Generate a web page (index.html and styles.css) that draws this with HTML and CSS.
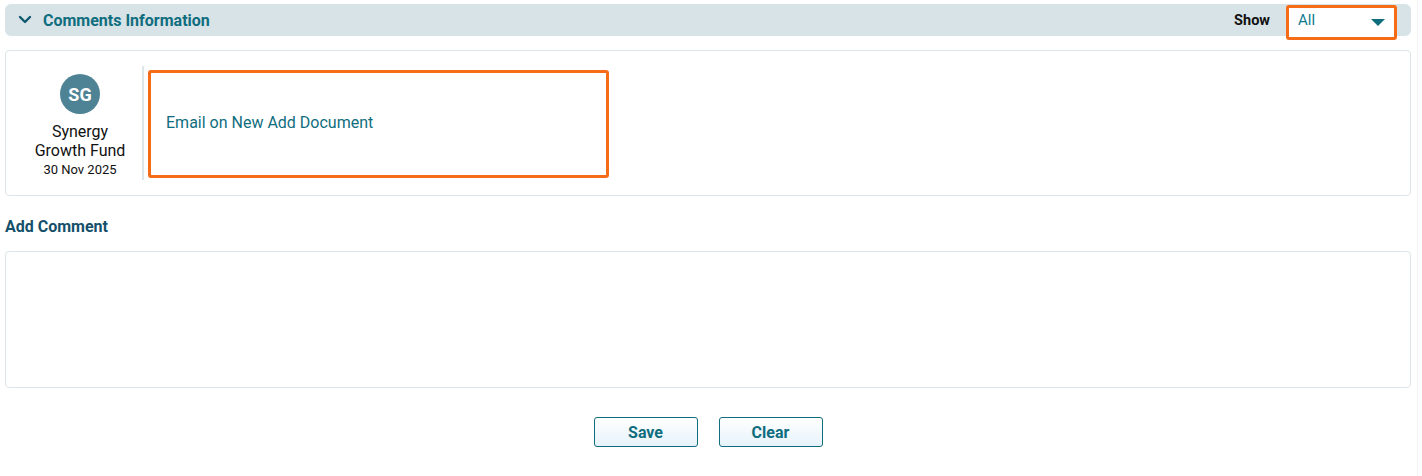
FILE: index.html
```html
<!DOCTYPE html>
<html>
<head>
<meta charset="utf-8">
<link rel="stylesheet" href="styles.css">
</head>
<body>
<div class="page">
  <div class="panel">
    <div class="section-header">
      <div class="title-group">
        <svg class="chevron" width="14" height="10" viewBox="0 0 14 10"><path d="M2 2 L7 7 L12 2" fill="none" stroke="#0f5a6e" stroke-width="2.4" stroke-linecap="round" stroke-linejoin="round"/></svg>
        <span class="title">Comments Information</span>
      </div>
      <div class="show-group">
        <span class="show-label">Show</span>
        <div class="select">
          <span class="select-value">All</span>
          <svg class="caret" width="14" height="8" viewBox="0 0 14 8"><path d="M0 0 L14 0 L7 7 Z" fill="#0f6d7e"/></svg>
        </div>
      </div>
    </div>

    <div class="comment-card">
      <div class="author">
        <div class="avatar">SG</div>
        <div class="author-name">Synergy<br>Growth Fund</div>
        <div class="author-date">30 Nov 2025</div>
      </div>
      <div class="divider"></div>
      <div class="comment-body">
        <div class="comment-text">Email on New Add Document</div>
      </div>
    </div>

    <div class="add-label">Add Comment</div>
    <textarea class="comment-input"></textarea>

    <div class="actions">
      <button class="btn">Save</button>
      <button class="btn">Clear</button>
    </div>
  </div>
</div>
</body>
</html>
```

FILE: styles.css
```css
html, body {
  margin: 0;
  padding: 0;
  background: #ffffff;
  font-family: Roboto, "Liberation Sans", Arial, sans-serif;
}
.page {
  width: 1418px;
  min-height: 476px;
  border-right: 1px solid #f1f3f4;
  box-sizing: border-box;
}
.panel {
  width: 1406px;
  margin-left: 5px;
  padding-top: 4px;
}
.section-header {
  height: 32px;
  background: #d8e3e8;
  border-radius: 6px;
  display: flex;
  align-items: center;
  justify-content: space-between;
}
.title-group {
  display: flex;
  align-items: center;
  padding-left: 13px;
}
.chevron {
  display: block;
  margin-right: 11px;
}
.title {
  font-size: 16px;
  font-weight: 700;
  color: #0f6d7e;
}
.show-group {
  display: flex;
  align-items: center;
  padding-right: 14px;
}
.show-label {
  font-size: 14.5px;
  font-weight: 700;
  color: #111;
  margin-right: 16px;
}
.select {
  width: 87px;
  height: 29px;
  border: 3px solid #f66c16;
  border-radius: 3px;
  background: #fff;
  display: flex;
  align-items: center;
  justify-content: space-between;
  padding: 0 9px 0 9px;
  margin-top: 4px;
}
.select-value {
  font-size: 15px;
  color: #0f7a8e;
  margin-top: -4px;
}
.caret {
  display: block;
  margin-top: 1px;
}
.comment-card {
  margin-top: 14px;
  height: 146px;
  box-sizing: border-box;
  border: 1px solid #dce5e9;
  border-radius: 4px;
  display: flex;
  align-items: center;
}
.author {
  width: 124px;
  margin-left: 12px;
  display: flex;
  flex-direction: column;
  align-items: center;
  padding-top: 5px;
}
.avatar {
  width: 40px;
  height: 40px;
  border-radius: 50%;
  background: #4e8395;
  color: #fff;
  font-weight: 700;
  font-size: 18px;
  display: flex;
  align-items: center;
  justify-content: center;
  margin-bottom: 8px;
}
.author-name {
  font-size: 16px;
  line-height: 19px;
  text-align: center;
  color: #111;
}
.author-date {
  font-size: 13px;
  color: #111;
  margin-top: 2px;
}
.divider {
  width: 2px;
  height: 114px;
  background: #dde6ea;
}
.comment-body {
  margin-left: 4px;
  width: 455px;
  height: 99px;
  padding-bottom: 3px;
  border: 3px solid #f66c16;
  border-radius: 3px;
  display: flex;
  align-items: center;
  margin-top: 2px;
}
.comment-text {
  font-size: 16px;
  color: #0f6d7e;
  padding-left: 15px;
}
.add-label {
  margin-top: 21px;
  font-size: 16px;
  font-weight: 700;
  color: #15506a;
  line-height: 19px;
}
.comment-input {
  display: block;
  margin-top: 15px;
  width: 1406px;
  height: 137px;
  box-sizing: border-box;
  border: 1px solid #dce5e9;
  border-radius: 4px;
  resize: none;
  outline: none;
}
.actions {
  display: flex;
  justify-content: center;
  gap: 21px;
  margin-top: 29px;
}
.btn {
  width: 104px;
  height: 30px;
  border: 1px solid #0f6d7e;
  border-radius: 3px;
  background: linear-gradient(#ffffff, #e6f3fb);
  color: #0f6d7e;
  font-family: Roboto, "Liberation Sans", Arial, sans-serif;
  font-size: 16px;
  font-weight: 700;
  cursor: pointer;
}
```
